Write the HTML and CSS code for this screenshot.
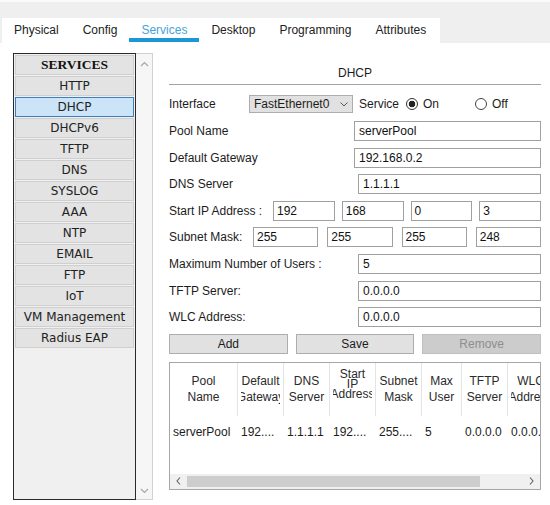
FILE: index.html
```html
<!DOCTYPE html>
<html>
<head>
<meta charset="utf-8">
<link rel="stylesheet" href="styles.css">
</head>
<body>
<div class="topband"></div>
<nav class="tabbar">
  <div class="tabs">
    <span class="tab">Physical</span>
    <span class="tab">Config</span>
    <span class="tab active">Services</span>
    <span class="tab">Desktop</span>
    <span class="tab">Programming</span>
    <span class="tab">Attributes</span>
  </div>
</nav>
<main class="main">
  <aside class="sidebar">
    <ul class="svc-list">
      <li class="svc head">SERVICES</li>
      <li class="svc">HTTP</li>
      <li class="svc sel">DHCP</li>
      <li class="svc">DHCPv6</li>
      <li class="svc">TFTP</li>
      <li class="svc">DNS</li>
      <li class="svc">SYSLOG</li>
      <li class="svc">AAA</li>
      <li class="svc">NTP</li>
      <li class="svc">EMAIL</li>
      <li class="svc">FTP</li>
      <li class="svc">IoT</li>
      <li class="svc">VM Management</li>
      <li class="svc">Radius EAP</li>
    </ul>
    <div class="vscroll">
      <svg width="9" height="6" viewBox="0 0 9 6"><path d="M1 5 L4.5 1.5 L8 5" fill="none" stroke="#a6a6a6" stroke-width="1.2"/></svg>
      <svg width="9" height="6" viewBox="0 0 9 6"><path d="M1 1 L4.5 4.5 L8 1" fill="none" stroke="#a6a6a6" stroke-width="1.2"/></svg>
    </div>
  </aside>

  <section class="panel">
    <div class="title">DHCP</div>

    <div class="iface">
      <span class="lbl-iface">Interface</span>
      <span class="combo">FastEthernet0
        <svg class="chev" width="8" height="5" viewBox="0 0 8 5"><path d="M0.5 0.5 L4 4 L7.5 0.5" fill="none" stroke="#555" stroke-width="1"/></svg>
      </span>
      <span class="svc-label">Service</span>
      <span class="radio on"></span>
      <span class="rtext">On</span>
      <span class="radio off"></span>
      <span class="rtext">Off</span>
    </div>

    <div class="form">
      <div class="row">
        <span class="lbl">Pool Name</span>
        <div class="box wide">serverPool</div>
      </div>
      <div class="row">
        <span class="lbl">Default Gateway</span>
        <div class="box wide">192.168.0.2</div>
      </div>
      <div class="row">
        <span class="lbl">DNS Server</span>
        <div class="box">1.1.1.1</div>
      </div>
      <div class="row">
        <span class="lbl lbl-start">Start IP Address :</span>
        <div class="octets start">
          <div class="box oct">192</div>
          <div class="box oct">168</div>
          <div class="box oct">0</div>
          <div class="box oct">3</div>
        </div>
      </div>
      <div class="row">
        <span class="lbl lbl-mask">Subnet Mask:</span>
        <div class="octets mask">
          <div class="box oct">255</div>
          <div class="box oct">255</div>
          <div class="box oct">255</div>
          <div class="box oct">248</div>
        </div>
      </div>
      <div class="row">
        <span class="lbl">Maximum Number of Users :</span>
        <div class="box">5</div>
      </div>
      <div class="row">
        <span class="lbl">TFTP Server:</span>
        <div class="box">0.0.0.0</div>
      </div>
      <div class="row">
        <span class="lbl">WLC Address:</span>
        <div class="box">0.0.0.0</div>
      </div>
      <div class="buttons">
        <span class="btn">Add</span>
        <span class="btn">Save</span>
        <span class="btn disabled">Remove</span>
      </div>
    </div>

    <div class="table">
      <div class="grid">
        <div class="thead">
          <div class="th"><div class="thi"><span>Pool</span><span>Name</span></div></div>
          <div class="th"><div class="thi"><span>Default</span><span>Gateway</span></div></div>
          <div class="th"><div class="thi"><span>DNS</span><span>Server</span></div></div>
          <div class="th"><div class="thi three"><span>Start</span><span>IP</span><span>Address</span></div></div>
          <div class="th"><div class="thi"><span>Subnet</span><span>Mask</span></div></div>
          <div class="th"><div class="thi"><span>Max</span><span>User</span></div></div>
          <div class="th"><div class="thi"><span>TFTP</span><span>Server</span></div></div>
          <div class="th"><div class="thi"><span>WLC</span><span>Address</span></div></div>
        </div>
        <div class="trow">
          <div class="td">serverPool</div>
          <div class="td">192....</div>
          <div class="td">1.1.1.1</div>
          <div class="td">192....</div>
          <div class="td">255....</div>
          <div class="td">5</div>
          <div class="td">0.0.0.0</div>
          <div class="td">0.0.0.0</div>
        </div>
      </div>
      <div class="hscroll">
        <span class="harrow"><svg width="5" height="8" viewBox="0 0 5 8"><path d="M4 0.5 L1 4 L4 7.5" fill="none" stroke="#606060" stroke-width="1.1"/></svg></span>
        <span class="thumb"></span>
        <span class="hspace"></span>
        <span class="harrow"><svg width="5" height="8" viewBox="0 0 5 8"><path d="M1 0.5 L4 4 L1 7.5" fill="none" stroke="#606060" stroke-width="1.1"/></svg></span>
      </div>
    </div>
  </section>
</main>
</body>
</html>
```

FILE: styles.css
```css
html, body {
  margin: 0;
  padding: 0;
}
body {
  width: 550px;
  height: 505px;
  overflow: hidden;
  background: #ffffff;
  font-family: "Liberation Sans", Arial, sans-serif;
  font-size: 12px;
  color: #1c1c1c;
}

/* top band and tabs */
.topband {
  height: 16px;
  border-top: 2px solid #fafafa;
  background: #efefef;
}
.tabbar {
  height: 25px;
  background: #efefef;
  padding-left: 2px;
  display: flex;
}
.tabs {
  display: flex;
  background: #ffffff;
  padding-right: 2px;
}
.tab {
  padding: 0 12px;
  line-height: 25px;
  color: #222222;
  white-space: nowrap;
}
.tab.active {
  color: #45a4dc;
  background: linear-gradient(to top, #ffffff 0, #ffffff 1px, #1c97d6 1px, #1c97d6 5px, #ffffff 5px);
}

/* main layout */
.main {
  display: flex;
  padding: 10px 0 0 13px;
}
.sidebar {
  display: flex;
  height: 447px;
}
.svc-list {
  box-sizing: border-box;
  width: 123px;
  height: 447px;
  margin: 0;
  padding: 1px;
  list-style: none;
  border: 1px solid #2a2a2a;
  background: #f0f0f0;
  display: flex;
  flex-direction: column;
  gap: 1px;
}
.svc {
  box-sizing: border-box;
  height: 20px;
  flex: none;
  border: 1px solid #cfcfcf;
  background: #e3e3e3;
  text-align: center;
  line-height: 18px;
  font-family: "DejaVu Sans", Verdana, sans-serif;
  font-size: 12px;
  color: #222222;
  white-space: nowrap;
}
.svc.head {
  font-family: "Liberation Serif", "Times New Roman", serif;
  font-weight: bold;
  font-size: 13.5px;
  color: #111111;
}
.svc.sel {
  background: #cce4f7;
  border-color: #3f7dbb;
}
.vscroll {
  box-sizing: border-box;
  width: 17px;
  height: 447px;
  border: 1px solid #d2d2d2;
  border-left: none;
  background: #f6f6f6;
  display: flex;
  flex-direction: column;
  justify-content: space-between;
  align-items: center;
  padding: 7px 0 5px;
}

/* right panel */
.panel {
  width: 372px;
  margin-left: 16px;
  display: flex;
  flex-direction: column;
}
.title {
  padding-top: 13px;
  padding-bottom: 4px;
  line-height: 14px;
  height: 14px;
  text-align: center;
  border-bottom: 1px solid #a3a3a3;
}
.iface {
  margin-top: 10px;
  height: 18px;
  display: flex;
  align-items: center;
}
.lbl-iface {
  width: 80px;
}
.combo {
  box-sizing: border-box;
  width: 104px;
  height: 18px;
  border: 1px solid #adadad;
  background: #e1e1e1;
  display: flex;
  align-items: center;
  padding-left: 4px;
  white-space: nowrap;
}
.chev {
  margin-left: auto;
  margin-right: 4px;
}
.svc-label {
  margin-left: 6px;
}
.radio {
  box-sizing: border-box;
  width: 12px;
  height: 12px;
  border-radius: 50%;
  border: 1px solid #333333;
  background: #ffffff;
}
.radio.on {
  margin-left: 7px;
  background: radial-gradient(circle, #222222 0, #222222 3px, #ffffff 3.6px);
}
.radio.off {
  margin-left: 36px;
  border-color: #444444;
}
.rtext {
  margin-left: 5px;
}

.form {
  margin-top: 8px;
  display: flex;
  flex-direction: column;
  gap: 6.6px;
}
.row {
  height: 20px;
  display: flex;
  align-items: center;
  justify-content: space-between;
}
.lbl {
  line-height: 20px;
  white-space: nowrap;
}
.box {
  box-sizing: border-box;
  width: 183px;
  height: 20px;
  border: 1px solid #a0a0a0;
  background: #ffffff;
  line-height: 18px;
  padding-left: 4px;
  color: #111111;
  white-space: nowrap;
  overflow: hidden;
}
.box.wide {
  width: 187px;
}
.lbl-start {
  width: 104px;
  flex: none;
}
.lbl-mask {
  width: 84px;
  flex: none;
}
.octets {
  flex: 1;
  display: flex;
}
.octets.start {
  gap: 7px;
}
.octets.mask {
  gap: 9px;
}
.box.oct {
  flex: 1;
  width: auto;
  padding-left: 3px;
}

.buttons {
  height: 20px;
  display: flex;
  gap: 8px;
}
.btn {
  box-sizing: border-box;
  flex: 1;
  height: 20px;
  border: 1px solid #adadad;
  background: #e1e1e1;
  text-align: center;
  line-height: 18px;
  color: #1c1c1c;
}
.btn.disabled {
  background: #cccccc;
  border-color: #bfbfbf;
  color: #8e8e8e;
}

/* table */
.table {
  margin-top: 8px;
  box-sizing: border-box;
  height: 128px;
  border: 1px solid #a6a6a6;
  display: flex;
  flex-direction: column;
}
.grid {
  flex: 1;
  overflow: hidden;
}
.thead,
.trow {
  display: grid;
  grid-template-columns: 68px 46px 46px 46px 46px 40px 46px 46px;
  width: max-content;
}
.th {
  height: 53px;
  border-right: 1px solid #e4e4e4;
  padding: 0 3px;
  display: flex;
  align-items: center;
  color: #2a2a2a;
}
.thi {
  width: 100%;
  overflow: hidden;
  display: flex;
  flex-direction: column;
  align-items: center;
  line-height: 16px;
}
.thi span {
  white-space: nowrap;
}
.thi.three {
  line-height: 10px;
  margin-bottom: 10px;
}
.trow {
  margin-top: 8px;
}
.td {
  line-height: 16px;
  padding-left: 3px;
  white-space: nowrap;
  overflow: hidden;
  color: #1c1c1c;
}
.hscroll {
  height: 15px;
  flex: none;
  background: #f0f0f0;
  display: flex;
  align-items: center;
}
.harrow {
  width: 17px;
  display: flex;
  justify-content: center;
  align-items: center;
}
.thumb {
  width: 293px;
  height: 11px;
  background: #cdcdcd;
}
.hspace {
  flex: 1;
}
```
